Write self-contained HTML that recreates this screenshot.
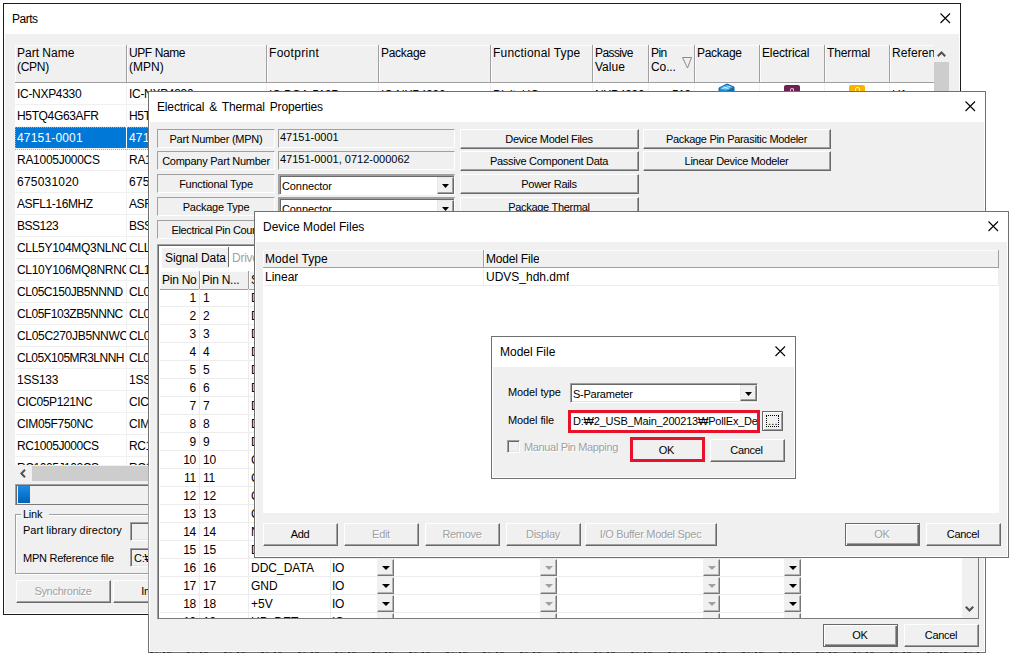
<!DOCTYPE html>
<html>
<head>
<meta charset="utf-8">
<title>Parts</title>
<style>
*{box-sizing:border-box;margin:0;padding:0}
html,body{width:1013px;height:658px;overflow:hidden;background:#fff}
body{font-family:"Liberation Sans",sans-serif;font-size:11px;color:#000;position:relative;letter-spacing:-.25px}
.a{position:absolute}
.win{position:absolute;background:#f0f0f0;border:1px solid #1c1c1c;overflow:hidden;box-shadow:inset 0 0 0 1px #fff}
.tb{position:absolute;left:0;top:0;right:0;height:30px;background:#fff}
.tt{position:absolute;top:8px;font-size:12px;white-space:nowrap;letter-spacing:0}
.x{position:absolute;width:11px;height:11px}
.btn{letter-spacing:-.3px;padding-right:1px;position:absolute;background:#f0f0f0;border:1px solid;border-color:#fff #696969 #696969 #fff;box-shadow:inset -1px -1px 0 #a0a0a0;text-align:center;white-space:nowrap;font-size:11px;overflow:hidden}
.btn.dis{color:#a0a0a0;text-shadow:1px 1px 0 #fff}
.s1{position:absolute;border:1px solid;border-color:#a0a0a0 #fff #fff #a0a0a0;white-space:nowrap;overflow:hidden;font-size:11px}
.s2{position:absolute;border:1px solid;border-color:#a0a0a0 #fff #fff #a0a0a0;box-shadow:inset 1px 1px 0 #696969,inset -1px -1px 0 #e3e3e3;background:#fff;white-space:nowrap;overflow:hidden;font-size:11px}
.t12{font-size:12px;letter-spacing:-.3px}
.nw{white-space:nowrap;overflow:hidden}
.arr{position:absolute;width:0;height:0;border-left:4px solid transparent;border-right:4px solid transparent;border-top:4px solid #000}
.arr.g{border-top-color:#a0a0a0}
/* parts list */
#pl{left:11px;top:41px;width:934px;height:436px;background:#fff;overflow:hidden}
#pl .hd{position:absolute;left:0;top:0;height:38px;width:919px;background:#f0f0f0;border-bottom:1px solid #a0a0a0}
#pl .hc{box-shadow:inset 1px 1px 0 #fcfcfc;letter-spacing:-.3px;position:absolute;top:0;height:37px;border-right:1px solid #a0a0a0;font-size:12px;line-height:14px;padding:1px 0 0 2px;white-space:nowrap;overflow:hidden}
#pl .r{position:absolute;left:0;width:919px;height:22px;border-bottom:1px solid #f0f0f0;font-size:12px;line-height:23px;white-space:nowrap}
#pl .r span{position:absolute;top:0;height:21px;overflow:hidden;border-right:1px solid #f0f0f0;padding-left:2px}
#pl .r.sel span{background:#0078d7;color:#fff;border-right-color:#fff}

/* E&T table */
#et{left:8px;top:152px;width:822px;height:375px;background:#fff;border:1px solid;border-color:#a0a0a0 #7a7a7a #7a7a7a #a0a0a0;box-shadow:inset 1px 1px 0 #696969;overflow:hidden}
#et .th{box-shadow:inset 1px 1px 0 #fcfcfc;position:absolute;top:26px;height:19px;background:#f0f0f0;border-right:1px solid #a0a0a0;border-bottom:1px solid #a0a0a0;font-size:12px;line-height:18px;padding-left:2px;white-space:nowrap;overflow:hidden}
#et .tr{position:absolute;left:2px;width:641px;height:18px;border-bottom:1px solid #ececec;font-size:12px;line-height:18px;white-space:nowrap}
#et .tr span{position:absolute;top:0;height:17px;border-right:1px solid #ececec;overflow:hidden}
#et .c1{left:0;width:40px;text-align:right;padding-right:3px}
#et .c2{left:40px;width:49px;padding-left:3px}
#et .c3{left:89px;width:82px;padding-left:2px;letter-spacing:0}
#et .c4{left:171px;width:46px;padding-left:1px;border-right:0 !important}
#et .db{position:absolute;top:0;width:17px;height:17px;background:#f0f0f0;border:1px solid;border-color:#f0f0f0 #777 #777 #f0f0f0;box-shadow:inset -1px -1px 0 #b4b4b4}
.lb{text-align:center;line-height:18px}
.cb{position:absolute;background:#fff;border-style:solid;border-width:2px 1px 1px 2px;border-color:#a0a0a0 #fff #fff #a0a0a0;box-shadow:inset 1px 1px 0 #696969;white-space:nowrap;overflow:hidden;font-size:11px}
.cbb{position:absolute;width:17px;height:17px;background:#f0f0f0;border:1px solid;border-color:#e8e8e8 #696969 #696969 #e8e8e8;box-shadow:inset -1px -1px 0 #a0a0a0}
.ar7{position:absolute;left:4px;top:6px;width:7px;height:4px}
#pl .r.sel:after{content:"";position:absolute;left:0;top:0;width:919px;height:21px;border:1px dotted #f0903c}
.btn.def{border-color:#696969;box-shadow:inset 1px 1px 0 #fff,inset -1px -1px 0 #696969,inset -2px -2px 0 #a0a0a0}
</style>
</head>
<body>

<!-- ================= Parts window ================= -->
<div class="win" id="w1" style="left:3px;top:3px;width:958px;height:612px">
  <div class="tb"></div>
  <div class="tt" style="left:8px;letter-spacing:-.5px">Parts</div>
  <svg class="x" style="left:936px;top:9px" viewBox="0 0 11 11"><path d="M0.5 0.5L10 10M10 0.5L0.5 10" stroke="#000" stroke-width="1.1" fill="none"/></svg>

  <div class="a" id="pl">
    <div class="hd">
      <div class="hc" style="left:0;width:112px;letter-spacing:0">Part Name<br><span style="letter-spacing:-.3px">(CPN)</span></div>
      <div class="hc" style="left:112px;width:140px;letter-spacing:-.4px">UPF Name<br><span style="letter-spacing:0">(MPN)</span></div>
      <div class="hc" style="left:252px;width:112px;letter-spacing:.3px">Footprint</div>
      <div class="hc" style="left:364px;width:112px;letter-spacing:-.28px">Package</div>
      <div class="hc" style="left:476px;width:102px;letter-spacing:.2px">Functional Type</div>
      <div class="hc" style="left:578px;width:56px;letter-spacing:-.6px">Passive<br><span style="letter-spacing:0">Value</span></div>
      <div class="hc" style="left:634px;width:46px;letter-spacing:-.6px">Pin<br><span style="letter-spacing:-.1px">Co...</span></div>
      <div class="hc" style="left:680px;width:65px;letter-spacing:-.28px">Package</div>
      <div class="hc" style="left:745px;width:65px;letter-spacing:-.13px">Electrical</div>
      <div class="hc" style="left:810px;width:65px;letter-spacing:-.13px">Thermal</div>
      <div class="hc" style="left:875px;width:44px;border-right:0;letter-spacing:.1px">Reference</div>
    </div>
    <div class="r" style="top:38px;letter-spacing:-0.3px"><span style="left:0;width:112px">IC-NXP4330</span><span style="left:112px;width:140px">IC-NXP4330</span></div>
    <div class="r" style="top:60px;letter-spacing:-0.35px"><span style="left:0;width:112px">H5TQ4G63AFR</span><span style="left:112px;width:140px">H5TQ4G63AFR</span></div>
    <div class="r sel" style="top:82px;letter-spacing:0.17px"><span style="left:0;width:112px">47151-0001</span><span style="left:112px;width:140px">47151-0001</span></div>
    <div class="r" style="top:104px;letter-spacing:-0.28px"><span style="left:0;width:112px">RA1005J000CS</span><span style="left:112px;width:140px">RA1005J000CS</span></div>
    <div class="r" style="top:126px;letter-spacing:0.21px"><span style="left:0;width:112px">675031020</span><span style="left:112px;width:140px">675031020</span></div>
    <div class="r" style="top:148px;letter-spacing:-0.39px"><span style="left:0;width:112px">ASFL1-16MHZ</span><span style="left:112px;width:140px">ASFL1-16MHZ</span></div>
    <div class="r" style="top:170px;letter-spacing:-0.49px"><span style="left:0;width:112px">BSS123</span><span style="left:112px;width:140px">BSS123</span></div>
    <div class="r" style="top:192px;letter-spacing:-0.3px"><span style="left:0;width:112px">CLL5Y104MQ3NLNC</span><span style="left:112px;width:140px">CLL5Y104MQ3NLNC</span></div>
    <div class="r" style="top:214px;letter-spacing:-0.3px"><span style="left:0;width:112px">CL10Y106MQ8NRNC</span><span style="left:112px;width:140px">CL10Y106MQ8NRNC</span></div>
    <div class="r" style="top:236px;letter-spacing:-0.46px"><span style="left:0;width:112px">CL05C150JB5NNND</span><span style="left:112px;width:140px">CL05C150JB5NNND</span></div>
    <div class="r" style="top:258px;letter-spacing:-0.46px"><span style="left:0;width:112px">CL05F103ZB5NNNC</span><span style="left:112px;width:140px">CL05F103ZB5NNNC</span></div>
    <div class="r" style="top:280px;letter-spacing:-0.3px"><span style="left:0;width:112px">CL05C270JB5NNWC</span><span style="left:112px;width:140px">CL05C270JB5NNWC</span></div>
    <div class="r" style="top:302px;letter-spacing:-0.52px"><span style="left:0;width:112px">CL05X105MR3LNNH</span><span style="left:112px;width:140px">CL05X105MR3LNNH</span></div>
    <div class="r" style="top:324px;letter-spacing:-0.26px"><span style="left:0;width:112px">1SS133</span><span style="left:112px;width:140px">1SS133</span></div>
    <div class="r" style="top:346px;letter-spacing:-0.38px"><span style="left:0;width:112px">CIC05P121NC</span><span style="left:112px;width:140px">CIC05P121NC</span></div>
    <div class="r" style="top:368px;letter-spacing:-0.35px"><span style="left:0;width:112px">CIM05F750NC</span><span style="left:112px;width:140px">CIM05F750NC</span></div>
    <div class="r" style="top:390px;letter-spacing:-0.43px"><span style="left:0;width:112px">RC1005J000CS</span><span style="left:112px;width:140px">RC1005J000CS</span></div>
    <div class="r" style="top:412px;letter-spacing:-0.43px"><span style="left:0;width:112px">RC1005J102CS</span><span style="left:112px;width:140px">RC1005J102CS</span></div>
    <!-- first row other cells -->
    <div class="a t12 nw" style="left:254px;top:43px;width:110px">IC-BGA-513P</div>
    <div class="a t12 nw" style="left:366px;top:43px;width:110px">IC-NXP4330</div>
    <div class="a t12 nw" style="left:478px;top:43px;width:100px">Digital IC</div>
    <div class="a t12 nw" style="left:580px;top:43px;width:54px">NXP4330</div>
    <div class="a t12 nw" style="left:636px;top:43px;width:40px;text-align:right">513</div>
    <div class="a t12 nw" style="left:877px;top:43px;width:40px">U1</div>
    <!-- row-1 grid lines -->
    <div class="a" style="left:363px;top:38px;width:1px;height:22px;background:#f0f0f0"></div>
    <div class="a" style="left:475px;top:38px;width:1px;height:22px;background:#f0f0f0"></div>
    <div class="a" style="left:577px;top:38px;width:1px;height:22px;background:#f0f0f0"></div>
    <div class="a" style="left:633px;top:38px;width:1px;height:22px;background:#f0f0f0"></div>
    <div class="a" style="left:679px;top:38px;width:1px;height:22px;background:#f0f0f0"></div>
    <div class="a" style="left:744px;top:38px;width:1px;height:22px;background:#f0f0f0"></div>
    <div class="a" style="left:809px;top:38px;width:1px;height:22px;background:#f0f0f0"></div>
    <div class="a" style="left:874px;top:38px;width:1px;height:22px;background:#f0f0f0"></div>
    <!-- icons -->
    <svg class="a" style="left:703px;top:38px" width="18" height="16" viewBox="0 0 18 16"><path d="M1 5L9 1L16 4L16 11L8 15L1 12Z" fill="#1e8fd6" stroke="#0a5ea6" stroke-width="1"/><path d="M2 5L9 2L15 4.3L8 7.5Z" fill="#4db4ee"/><path d="M5 3.8L11 6.2M3.5 5.8L12.5 3.2" stroke="#d8f0ff" stroke-width=".8" fill="none"/><path d="M8 8L16 4L16 11L8 15Z" fill="#0d6db5"/></svg>
    <div class="a" style="left:769px;top:40px;width:16px;height:14px;background:#6b2250;border-radius:2px"></div>
    <div class="a" style="left:775px;top:43px;width:4px;height:8px;border:1px solid #e8c8de;border-bottom:0;border-radius:2px 2px 0 0"></div>
    <div class="a" style="left:834px;top:40px;width:16px;height:14px;background:#f5b400;border-radius:2px"></div>
    <div class="a" style="left:840px;top:42px;width:5px;height:10px;border:1px solid #fff3c0;border-radius:2px"></div>
    <!-- sort arrow -->
    <svg class="a" style="left:667px;top:12px" width="10" height="12" viewBox="0 0 10 12"><path d="M0.5 0.5H9.5L5.5 11Z" fill="none" stroke="#8a8a8a" stroke-width="1"/></svg>
    <!-- v scrollbar -->
    <div class="a" style="left:919px;top:0;width:15px;height:420px;background:#f0f0f0"></div>
    <div class="a" style="left:919px;top:17px;width:15px;height:300px;background:#cdcdcd"></div>
    <svg class="a" style="left:922px;top:6px" width="9" height="6" viewBox="0 0 9 6"><path d="M0.8 5.2L4.5 1.5L8.2 5.2" fill="none" stroke="#505050" stroke-width="2"/></svg>
    <!-- h scrollbar -->
    <div class="a" style="left:0;top:420px;width:934px;height:16px;background:#f0f0f0"></div>
    <div class="a" style="left:17px;top:421px;width:600px;height:15px;background:#cdcdcd"></div>
    <svg class="a" style="left:5px;top:424px" width="6" height="9" viewBox="0 0 6 9"><path d="M5 0.8L1.3 4.5L5 8.2" fill="none" stroke="#505050" stroke-width="2"/></svg>
  </div>

  <!-- progress -->
  <div class="a" style="left:11px;top:480px;width:934px;height:21px;border:1px solid;border-color:#a0a0a0 #7a7a7a #7a7a7a #a0a0a0;box-shadow:inset 1px 1px 0 #696969;background:#f0f0f0"></div>
  <div class="a" style="left:14px;top:482px;width:12px;height:17px;background:linear-gradient(#1a8ae6,#0063b8)"></div>
  <!-- link group -->
  <div class="a" style="left:11px;top:510px;width:934px;height:60px;border:1px solid #a0a0a0;box-shadow:1px 1px 0 #fff,inset 1px 1px 0 #fff"></div>
  <div class="a" style="left:17px;top:504px;width:28px;height:14px;background:#f0f0f0;padding-left:2px">Link</div>
  <div class="a nw" style="left:19px;top:520px;letter-spacing:.02px">Part library directory</div>
  <div class="s2" style="left:126px;top:518px;width:300px;height:19px;background:#f0f0f0"></div>
  <div class="a nw" style="left:19px;top:548px">MPN Reference file</div>
  <div class="s2" style="left:126px;top:544px;width:300px;height:19px;background:#f0f0f0;padding:3px 0 0 3px">C:&#8361;</div>
  <div class="btn dis" style="left:12px;top:576px;width:95px;height:23px;line-height:20px">Synchronize</div>
  <div class="btn" style="left:109px;top:576px;width:95px;height:23px;line-height:20px">Import...</div>
</div>


<!-- ================= Electrical & Thermal Properties ================= -->
<div class="win" id="w2" style="left:148px;top:91px;width:838px;height:562px;border-color:#707070">
  <div class="tb"></div>
  <div class="tt" style="left:8px;letter-spacing:-.15px;word-spacing:1.8px">Electrical &amp; Thermal Properties</div>
  <svg class="x" style="left:816px;top:9px" viewBox="0 0 11 11"><path d="M0.5 0.5L10 10M10 0.5L0.5 10" stroke="#000" stroke-width="1.1" fill="none"/></svg>

  <div class="s1 lb" style="left:8px;top:37px;width:118px;height:19px;line-height:18px">Part Number (MPN)</div>
  <div class="s1 lb" style="left:8px;top:59px;width:118px;height:19px;line-height:18px">Company Part Number</div>
  <div class="s1 lb" style="left:8px;top:82px;width:118px;height:19px;line-height:18px">Functional Type</div>
  <div class="s1 lb" style="left:8px;top:105px;width:118px;height:19px;line-height:18px">Package Type</div>
  <div class="s1 lb" style="left:8px;top:128px;width:118px;height:19px;line-height:18px;letter-spacing:-.35px">Electrical Pin Count</div>

  <div class="s1" style="left:129px;top:37px;width:177px;height:19px;padding:1px 0 0 1px;letter-spacing:0">47151-0001</div>
  <div class="s1" style="left:129px;top:59px;width:177px;height:19px;padding:1px 0 0 1px;letter-spacing:0">47151-0001, 0712-000062</div>
  <div class="cb" style="left:129px;top:82px;width:177px;height:21px;padding:4px 0 0 2px;letter-spacing:-.1px">Connector</div>
  <div class="cbb" style="left:288px;top:85px"><svg class="ar7" viewBox="0 0 7 4"><path d="M0 0H7L3.5 4Z"/></svg></div>
  <div class="cb" style="left:129px;top:105px;width:177px;height:21px;padding:4px 0 0 2px;letter-spacing:-.1px">Connector</div>
  <div class="cbb" style="left:288px;top:108px"><svg class="ar7" viewBox="0 0 7 4"><path d="M0 0H7L3.5 4Z"/></svg></div>

  <div class="btn" style="left:311px;top:37px;width:179px;height:20px;line-height:18px">Device Model Files</div>
  <div class="btn" style="left:311px;top:59px;width:179px;height:20px;line-height:18px">Passive Component Data</div>
  <div class="btn" style="left:311px;top:82px;width:179px;height:20px;line-height:18px">Power Rails</div>
  <div class="btn" style="left:311px;top:105px;width:179px;height:20px;line-height:18px">Package Thermal</div>
  <div class="btn" style="left:494px;top:37px;width:188px;height:20px;line-height:18px">Package Pin Parasitic Modeler</div>
  <div class="btn" style="left:494px;top:59px;width:188px;height:20px;line-height:18px">Linear Device Modeler</div>

  <div class="a" id="et">
    <div class="a" style="left:4px;top:3px;width:66px;height:20px;background:#f0f0f0;font-size:12px;line-height:21px;padding-left:3px;white-space:nowrap;letter-spacing:-.1px">Signal Data</div>
    <div class="a" style="left:70px;top:2px;width:1px;height:20px;background:#696969"></div>
    <div class="a" style="left:74px;top:3px;font-size:12px;line-height:21px;color:#a0a0a0;white-space:nowrap">Driver Data</div>
    <div class="th" style="left:2px;width:40px">Pin No</div>
    <div class="th" style="left:42px;width:49px">Pin N...</div>
    <div class="th" style="left:91px;width:82px">Signal Name</div>
    <div class="th" style="left:173px;width:64px">Type</div>
    <div class="th" style="left:237px;width:163px">Model</div>
    <div class="th" style="left:400px;width:163px">Model</div>
    <div class="th" style="left:563px;width:81px">Power</div>
    <div class="th" style="left:644px;width:160px;border-right:0"></div>
      <div class="tr" style="top:44px"><span class="c1">1</span><span class="c2">1</span><span class="c3">D</span><span class="c4">IO</span><i class="db" style="left:217px"><b class="arr" style="left:4px;top:6px"></b></i><i class="db" style="left:380px"><b class="arr g" style="left:4px;top:6px"></b></i><i class="db" style="left:543px"><b class="arr g" style="left:4px;top:6px"></b></i><i class="db" style="left:624px"><b class="arr" style="left:4px;top:6px"></b></i></div>
      <div class="tr" style="top:62px"><span class="c1">2</span><span class="c2">2</span><span class="c3">D</span><span class="c4">IO</span><i class="db" style="left:217px"><b class="arr" style="left:4px;top:6px"></b></i><i class="db" style="left:380px"><b class="arr g" style="left:4px;top:6px"></b></i><i class="db" style="left:543px"><b class="arr g" style="left:4px;top:6px"></b></i><i class="db" style="left:624px"><b class="arr" style="left:4px;top:6px"></b></i></div>
      <div class="tr" style="top:80px"><span class="c1">3</span><span class="c2">3</span><span class="c3">D</span><span class="c4">IO</span><i class="db" style="left:217px"><b class="arr" style="left:4px;top:6px"></b></i><i class="db" style="left:380px"><b class="arr g" style="left:4px;top:6px"></b></i><i class="db" style="left:543px"><b class="arr g" style="left:4px;top:6px"></b></i><i class="db" style="left:624px"><b class="arr" style="left:4px;top:6px"></b></i></div>
      <div class="tr" style="top:98px"><span class="c1">4</span><span class="c2">4</span><span class="c3">D</span><span class="c4">IO</span><i class="db" style="left:217px"><b class="arr" style="left:4px;top:6px"></b></i><i class="db" style="left:380px"><b class="arr g" style="left:4px;top:6px"></b></i><i class="db" style="left:543px"><b class="arr g" style="left:4px;top:6px"></b></i><i class="db" style="left:624px"><b class="arr" style="left:4px;top:6px"></b></i></div>
      <div class="tr" style="top:116px"><span class="c1">5</span><span class="c2">5</span><span class="c3">D</span><span class="c4">IO</span><i class="db" style="left:217px"><b class="arr" style="left:4px;top:6px"></b></i><i class="db" style="left:380px"><b class="arr g" style="left:4px;top:6px"></b></i><i class="db" style="left:543px"><b class="arr g" style="left:4px;top:6px"></b></i><i class="db" style="left:624px"><b class="arr" style="left:4px;top:6px"></b></i></div>
      <div class="tr" style="top:134px"><span class="c1">6</span><span class="c2">6</span><span class="c3">D</span><span class="c4">IO</span><i class="db" style="left:217px"><b class="arr" style="left:4px;top:6px"></b></i><i class="db" style="left:380px"><b class="arr g" style="left:4px;top:6px"></b></i><i class="db" style="left:543px"><b class="arr g" style="left:4px;top:6px"></b></i><i class="db" style="left:624px"><b class="arr" style="left:4px;top:6px"></b></i></div>
      <div class="tr" style="top:152px"><span class="c1">7</span><span class="c2">7</span><span class="c3">D</span><span class="c4">IO</span><i class="db" style="left:217px"><b class="arr" style="left:4px;top:6px"></b></i><i class="db" style="left:380px"><b class="arr g" style="left:4px;top:6px"></b></i><i class="db" style="left:543px"><b class="arr g" style="left:4px;top:6px"></b></i><i class="db" style="left:624px"><b class="arr" style="left:4px;top:6px"></b></i></div>
      <div class="tr" style="top:170px"><span class="c1">8</span><span class="c2">8</span><span class="c3">D</span><span class="c4">IO</span><i class="db" style="left:217px"><b class="arr" style="left:4px;top:6px"></b></i><i class="db" style="left:380px"><b class="arr g" style="left:4px;top:6px"></b></i><i class="db" style="left:543px"><b class="arr g" style="left:4px;top:6px"></b></i><i class="db" style="left:624px"><b class="arr" style="left:4px;top:6px"></b></i></div>
      <div class="tr" style="top:188px"><span class="c1">9</span><span class="c2">9</span><span class="c3">D</span><span class="c4">IO</span><i class="db" style="left:217px"><b class="arr" style="left:4px;top:6px"></b></i><i class="db" style="left:380px"><b class="arr g" style="left:4px;top:6px"></b></i><i class="db" style="left:543px"><b class="arr g" style="left:4px;top:6px"></b></i><i class="db" style="left:624px"><b class="arr" style="left:4px;top:6px"></b></i></div>
      <div class="tr" style="top:206px"><span class="c1">10</span><span class="c2">10</span><span class="c3">C</span><span class="c4">IO</span><i class="db" style="left:217px"><b class="arr" style="left:4px;top:6px"></b></i><i class="db" style="left:380px"><b class="arr g" style="left:4px;top:6px"></b></i><i class="db" style="left:543px"><b class="arr g" style="left:4px;top:6px"></b></i><i class="db" style="left:624px"><b class="arr" style="left:4px;top:6px"></b></i></div>
      <div class="tr" style="top:224px"><span class="c1">11</span><span class="c2">11</span><span class="c3">C</span><span class="c4">IO</span><i class="db" style="left:217px"><b class="arr" style="left:4px;top:6px"></b></i><i class="db" style="left:380px"><b class="arr g" style="left:4px;top:6px"></b></i><i class="db" style="left:543px"><b class="arr g" style="left:4px;top:6px"></b></i><i class="db" style="left:624px"><b class="arr" style="left:4px;top:6px"></b></i></div>
      <div class="tr" style="top:242px"><span class="c1">12</span><span class="c2">12</span><span class="c3">C</span><span class="c4">IO</span><i class="db" style="left:217px"><b class="arr" style="left:4px;top:6px"></b></i><i class="db" style="left:380px"><b class="arr g" style="left:4px;top:6px"></b></i><i class="db" style="left:543px"><b class="arr g" style="left:4px;top:6px"></b></i><i class="db" style="left:624px"><b class="arr" style="left:4px;top:6px"></b></i></div>
      <div class="tr" style="top:260px"><span class="c1">13</span><span class="c2">13</span><span class="c3">C</span><span class="c4">IO</span><i class="db" style="left:217px"><b class="arr" style="left:4px;top:6px"></b></i><i class="db" style="left:380px"><b class="arr g" style="left:4px;top:6px"></b></i><i class="db" style="left:543px"><b class="arr g" style="left:4px;top:6px"></b></i><i class="db" style="left:624px"><b class="arr" style="left:4px;top:6px"></b></i></div>
      <div class="tr" style="top:278px"><span class="c1">14</span><span class="c2">14</span><span class="c3">N</span><span class="c4">IO</span><i class="db" style="left:217px"><b class="arr" style="left:4px;top:6px"></b></i><i class="db" style="left:380px"><b class="arr g" style="left:4px;top:6px"></b></i><i class="db" style="left:543px"><b class="arr g" style="left:4px;top:6px"></b></i><i class="db" style="left:624px"><b class="arr" style="left:4px;top:6px"></b></i></div>
      <div class="tr" style="top:296px"><span class="c1">15</span><span class="c2">15</span><span class="c3">D</span><span class="c4">IO</span><i class="db" style="left:217px"><b class="arr" style="left:4px;top:6px"></b></i><i class="db" style="left:380px"><b class="arr g" style="left:4px;top:6px"></b></i><i class="db" style="left:543px"><b class="arr g" style="left:4px;top:6px"></b></i><i class="db" style="left:624px"><b class="arr" style="left:4px;top:6px"></b></i></div>
      <div class="tr" style="top:314px"><span class="c1">16</span><span class="c2">16</span><span class="c3">DDC_DATA</span><span class="c4">IO</span><i class="db" style="left:217px"><b class="arr" style="left:4px;top:6px"></b></i><i class="db" style="left:380px"><b class="arr g" style="left:4px;top:6px"></b></i><i class="db" style="left:543px"><b class="arr g" style="left:4px;top:6px"></b></i><i class="db" style="left:624px"><b class="arr" style="left:4px;top:6px"></b></i></div>
      <div class="tr" style="top:332px"><span class="c1">17</span><span class="c2">17</span><span class="c3">GND</span><span class="c4">IO</span><i class="db" style="left:217px"><b class="arr" style="left:4px;top:6px"></b></i><i class="db" style="left:380px"><b class="arr g" style="left:4px;top:6px"></b></i><i class="db" style="left:543px"><b class="arr g" style="left:4px;top:6px"></b></i><i class="db" style="left:624px"><b class="arr" style="left:4px;top:6px"></b></i></div>
      <div class="tr" style="top:350px"><span class="c1">18</span><span class="c2">18</span><span class="c3">+5V</span><span class="c4">IO</span><i class="db" style="left:217px"><b class="arr" style="left:4px;top:6px"></b></i><i class="db" style="left:380px"><b class="arr g" style="left:4px;top:6px"></b></i><i class="db" style="left:543px"><b class="arr g" style="left:4px;top:6px"></b></i><i class="db" style="left:624px"><b class="arr" style="left:4px;top:6px"></b></i></div>
      <div class="tr" style="top:368px"><span class="c1">19</span><span class="c2">19</span><span class="c3">HP_DET</span><span class="c4">IO</span><i class="db" style="left:217px"><b class="arr" style="left:4px;top:6px"></b></i><i class="db" style="left:380px"><b class="arr g" style="left:4px;top:6px"></b></i><i class="db" style="left:543px"><b class="arr g" style="left:4px;top:6px"></b></i><i class="db" style="left:624px"><b class="arr" style="left:4px;top:6px"></b></i></div>
    <!-- v scrollbar -->
    <div class="a" style="left:804px;top:26px;width:16px;height:347px;background:#f0f0f0"></div>
    <svg class="a" style="left:807px;top:361px" width="9" height="6" viewBox="0 0 9 6"><path d="M0.8 0.8L4.5 4.5L8.2 0.8" fill="none" stroke="#505050" stroke-width="2.1"/></svg>
  </div>

  <div class="btn def" style="left:674px;top:532px;width:75px;height:23px;line-height:20px">OK</div>
  <div class="btn" style="left:755px;top:532px;width:75px;height:23px;line-height:20px">Cancel</div>
</div>


<div class="a" style="left:148px;top:466px;width:1px;height:148px;background:#a6a6a6"></div>
<!-- remnants below E&T window -->
<div class="a" style="left:150px;top:652px;width:830px;height:1px;background:repeating-linear-gradient(90deg,#333 0 3px,transparent 3px 5px,#555 5px 8px,transparent 8px 13px,#2a2a2a 13px 15px,transparent 15px 17px,#444 17px 21px,transparent 21px 37px)"></div>
<!-- ================= Device Model Files ================= -->
<div class="win" id="w3" style="left:254px;top:211px;width:755px;height:347px;border-color:#707070">
  <div class="tb"></div>
  <div class="tt" style="left:8px">Device Model Files</div>
  <svg class="x" style="left:733px;top:9px" viewBox="0 0 11 11"><path d="M0.5 0.5L10 10M10 0.5L0.5 10" stroke="#000" stroke-width="1.1" fill="none"/></svg>
  <div class="a" style="left:8px;top:38px;width:736px;height:263px;background:#fff">
    <div class="a" style="left:0;top:0;width:736px;height:18px;background:#f0f0f0;border-bottom:1px solid #a0a0a0;box-shadow:inset 1px 1px 0 #fcfcfc"></div><div class="a" style="left:221px;top:1px;width:1px;height:16px;background:#fcfcfc"></div>
    <div class="a t12 nw" style="left:2px;top:2px;letter-spacing:.1px">Model Type</div>
    <div class="a" style="left:220px;top:0;width:1px;height:17px;background:#a0a0a0"></div>
    <div class="a t12 nw" style="left:223px;top:2px;letter-spacing:-.2px">Model File</div>
    <div class="a" style="left:735px;top:0;width:1px;height:17px;background:#a0a0a0"></div>
    <div class="a" style="left:0;top:18px;width:736px;height:18px;border-bottom:1px solid #ececec;border-right:1px solid #ececec"></div>
    <div class="a" style="left:220px;top:18px;width:1px;height:17px;background:#ececec"></div>
    <div class="a t12 nw" style="left:2px;top:20px;letter-spacing:0">Linear</div>
    <div class="a t12 nw" style="left:223px;top:20px;letter-spacing:0">UDVS_hdh.dmf</div>
  </div>
  <div class="btn" style="left:8px;top:311px;width:75px;height:23px;line-height:20px">Add</div>
  <div class="btn dis" style="left:89px;top:311px;width:75px;height:23px;line-height:20px">Edit</div>
  <div class="btn dis" style="left:170px;top:311px;width:75px;height:23px;line-height:20px">Remove</div>
  <div class="btn dis" style="left:251px;top:311px;width:75px;height:23px;line-height:20px">Display</div>
  <div class="btn dis" style="left:330px;top:311px;width:132px;height:23px;line-height:20px">I/O Buffer Model Spec</div>
  <div class="btn dis def" style="left:590px;top:311px;width:75px;height:23px;line-height:20px">OK</div>
  <div class="btn" style="left:671px;top:311px;width:75px;height:23px;line-height:20px">Cancel</div>
</div>

<!-- ================= Model File ================= -->
<div class="win" id="w4" style="left:491px;top:336px;width:305px;height:143px;border-color:#707070">
  <div class="tb"></div>
  <div class="tt" style="left:8px">Model File</div>
  <svg class="x" style="left:283px;top:9px" viewBox="0 0 11 11"><path d="M0.5 0.5L10 10M10 0.5L0.5 10" stroke="#000" stroke-width="1.1" fill="none"/></svg>
  <div class="a nw" style="left:16px;top:49px;letter-spacing:-.1px">Model type</div>
  <div class="cb" style="left:78px;top:46px;width:188px;height:20px;padding:4px 0 0 2px;border-width:1px;box-shadow:inset 1px 1px 0 #696969,inset -1px -1px 0 #e3e3e3">S-Parameter</div>
  <div class="cbb" style="left:248px;top:48px;height:16px"><svg class="ar7" viewBox="0 0 7 4"><path d="M0 0H7L3.5 4Z"/></svg></div>
  <div class="a nw" style="left:16px;top:77px;letter-spacing:-.1px">Model file</div>
  <div class="a nw" style="left:79px;top:77px;width:186px;height:16px;background:#fff;padding:1px 0 0 2px;letter-spacing:-.2px">D:&#8361;2_USB_Main_200213&#8361;PollEx_Demo</div>
  <div class="a" style="left:76px;top:73px;width:192px;height:23px;border:3px solid #e8112a"></div>
  <div class="a" style="left:270px;top:74px;width:21px;height:20px;background:#f0f0f0;border:1px solid #696969;box-shadow:inset 1px 1px 0 #fff,inset -1px -1px 0 #a0a0a0"><div class="a" style="left:3px;top:3px;width:13px;height:12px;border:1px dotted #000"></div><div class="a" style="left:5px;top:3px;font-size:11px;letter-spacing:.2px">...</div></div>
  <div class="a" style="left:15px;top:103px;width:13px;height:13px;border:1px solid;border-color:#a0a0a0 #fff #fff #a0a0a0;box-shadow:inset 1px 1px 0 #696969,inset -1px -1px 0 #e3e3e3;background:#f0f0f0"></div>
  <div class="a nw" style="left:32px;top:104px;color:#a0a0a0;text-shadow:1px 1px 0 #fff;letter-spacing:-.35px">Manual Pin Mapping</div>
  <div class="a" style="left:138px;top:100px;width:75px;height:25px;background:#f0f0f0;border:3px solid #e8112a;text-align:center;line-height:21px;padding-right:2px">OK</div>
  <div class="btn" style="left:218px;top:102px;width:75px;height:23px;line-height:21px;padding-right:2px">Cancel</div>
</div>

</body>
</html>
